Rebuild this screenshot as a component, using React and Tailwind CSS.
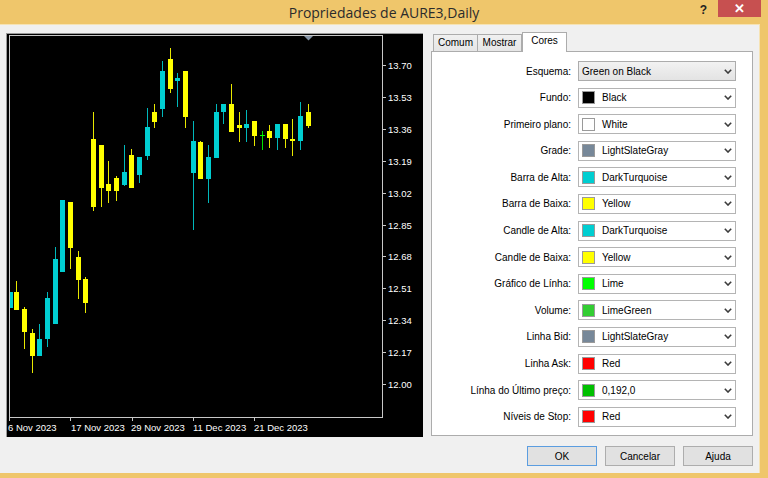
import React from "react";

const candles = [
  [10, 292, 308, 292, 308, "c", 3],
  [14, 292, 310, 281, 310, "y"],
  [22, 309, 332, 307, 349, "y"],
  [30, 333, 356, 329, 373, "y"],
  [37, 339, 356, 324, 356, "c"],
  [45, 298, 339, 292, 347, "c"],
  [53, 259, 324, 247, 324, "c"],
  [60, 200, 272, 200, 272, "c"],
  [68, 202, 248, 202, 269, "y"],
  [76, 257, 280, 251, 299, "y"],
  [83, 279, 303, 277, 313, "y"],
  [91, 139, 207, 112, 211, "y"],
  [99, 145, 188, 145, 207, "y"],
  [106, 184, 191, 161, 203, "y"],
  [114, 178, 191, 176, 201, "y"],
  [122, 172, 185, 145, 186, "c"],
  [129, 155, 188, 149, 188, "y"],
  [137, 157, 175, 157, 183, "c"],
  [145, 127, 156, 108, 160, "c"],
  [152, 112, 122, 104, 128, "y"],
  [160, 71, 109, 61, 117, "c"],
  [168, 59, 89, 48, 93, "y"],
  [175, 78, 81, 73, 107, "c"],
  [183, 71, 117, 71, 128, "y"],
  [191, 141, 173, 121, 230, "c"],
  [198, 142, 179, 141, 179, "y"],
  [206, 157, 179, 145, 203, "c"],
  [214, 112, 158, 104, 158, "c"],
  [221, 104, 112, 104, 124, "c"],
  [229, 104, 132, 84, 132, "y"],
  [237, 125, 128, 112, 142, "y"],
  [244, 124, 128, 110, 142, "c"],
  [252, 121, 136, 121, 146, "y"],
  [260, 135, 136, 131, 150, "l"],
  [267, 131, 138, 125, 148, "y"],
  [275, 124, 138, 124, 150, "c"],
  [283, 124, 139, 124, 148, "y"],
  [290, 139, 141, 119, 156, "y"],
  [298, 116, 141, 102, 150, "c"],
  [306, 112, 126, 104, 128, "y"],
];

const bodyColor = { y: "#ffff00", c: "#00ced1", l: "#00ff00" };
const wickColor = { y: "#e8e800", c: "#00b8bb", l: "#00e000" };

const prices = ["13.70", "13.53", "13.36", "13.19", "13.02", "12.85", "12.68", "12.51", "12.34", "12.17", "12.00"];
const dates = [
  [9, 8, "6 Nov 2023"],
  [70, 71, "17 Nov 2023"],
  [132, 131, "29 Nov 2023"],
  [193, 193, "11 Dec 2023"],
  [254, 254, "21 Dec 2023"],
];

function Chart() {
  return (
    <svg width="417" height="404" viewBox="6 33 417 404" className="block shrink-0">
      <rect x="6" y="33" width="417" height="404" fill="#000" />
      <line x1="6.5" y1="33" x2="6.5" y2="437" stroke="#9a9a9a" />
      <line x1="6" y1="33.5" x2="423" y2="33.5" stroke="#9a9a9a" />
      <rect x="9.5" y="35.5" width="373" height="382" fill="none" stroke="#c8c8c8" />
      <polygon points="304,36 313,36 308.5,40.5" fill="#8796a8" />
      {candles.map(([x, bt, bb, wt, wb, t, w], i) => (
        <g key={i}>
          <rect x={x + 2} y={wt} width="1" height={wb - wt} fill={wickColor[t]} />
          <rect x={x} y={bt} width={w || 5} height={Math.max(bb - bt, 1)} fill={bodyColor[t]} />
        </g>
      ))}
      {prices.map((p, i) => {
        const y = Math.round(65 + i * 31.9);
        return (
          <g key={p}>
            <rect x="383" y={y} width="3" height="1" fill="#c8c8c8" />
            <text x="388" y={y + 3.6} fontFamily="'Liberation Sans', Arial, sans-serif" fontSize="9.5" fill="#ffffff">
              {p}
            </text>
          </g>
        );
      })}
      {dates.map(([tx, lx, d]) => (
        <g key={d}>
          <rect x={tx} y="418" width="1" height="3" fill="#c8c8c8" />
          <text x={lx} y="430.5" fontFamily="'Liberation Sans', Arial, sans-serif" fontSize="9.5" fill="#ffffff">
            {d}
          </text>
        </g>
      ))}
    </svg>
  );
}

const rows = [
  ["Fundo:", "#000000", "Black"],
  ["Primeiro plano:", "#ffffff", "White"],
  ["Grade:", "#778899", "LightSlateGray"],
  ["Barra de Alta:", "#00ced1", "DarkTurquoise"],
  ["Barra de Baixa:", "#ffff00", "Yellow"],
  ["Candle de Alta:", "#00ced1", "DarkTurquoise"],
  ["Candle de Baixa:", "#ffff00", "Yellow"],
  ["Gráfico de Línha:", "#00ff00", "Lime"],
  ["Volume:", "#32cd32", "LimeGreen"],
  ["Linha Bid:", "#778899", "LightSlateGray"],
  ["Linha Ask:", "#ff0000", "Red"],
  ["Línha do Último preço:", "#00c000", "0,192,0"],
  ["Níveis de Stop:", "#ff0000", "Red"],
];

function Chevron() {
  return (
    <svg width="8" height="5" viewBox="0 0 8 5" className="shrink-0">
      <path d="M0.8 0.8 L4 4 L7.2 0.8" fill="none" stroke="#3c3c3c" strokeWidth="1.6" />
    </svg>
  );
}

function Row({ label, children, gray }) {
  return (
    <div className="flex h-[20px] items-center">
      <div className="w-[146px] pr-[7px] text-right">{label}</div>
      <div
        className={
          "flex h-[20px] w-[158px] items-center border pr-[3px] " +
          (gray ? "border-[#acacac] bg-gradient-to-b from-[#f2f2f2] to-[#e3e3e3] pl-[3px]" : "border-[#b4b4b4] bg-white pl-[3px]")
        }
      >
        <div className="flex flex-1 items-center">{children}</div>
        <Chevron />
      </div>
    </div>
  );
}

export default function App() {
  const font = { fontFamily: "'Liberation Sans', Arial, sans-serif" };
  return (
    <div className="flex h-[478px] w-[768px] flex-col overflow-hidden bg-[#efc66b] text-[10px] text-black" style={font}>
      <div className="grid h-[24px] shrink-0 grid-cols-[1fr_auto_1fr] items-start">
        <div />
        <div className="pt-[2px] text-[14px] text-[#2b2b2b]" style={{ fontFamily: "'Open Sans', 'Noto Sans', sans-serif" }}>
          Propriedades de AURE3,Daily
        </div>
        <div className="flex items-start justify-end pr-[7px]">
          <span className="mr-[11px] mt-[1px] text-[12px] font-bold text-[#222]">?</span>
          <div className="flex h-[17px] w-[43px] items-center justify-center bg-[#c75050] text-[13px] font-bold leading-none text-white">
            ✕
          </div>
        </div>
      </div>
      <div className="mb-[5px] mr-[8px] flex flex-1 items-start border-r border-t border-[#f6e3b4] bg-[#f0f0f0] pt-[7px]">
        <div className="ml-[6px] mt-[1px]">
          <Chart />
        </div>
        <div className="ml-[8px] flex w-[322px] flex-col">
          <div className="flex h-[20px] items-end pl-[2px]">
            <div className="flex h-[18px] w-[45px] items-center justify-center border border-b-0 border-[#acacac] bg-gradient-to-b from-[#f0f0f0] to-[#e5e5e5] pb-[2px]">
              Comum
            </div>
            <div className="-ml-px flex h-[18px] w-[45px] items-center justify-center border border-b-0 border-[#acacac] bg-gradient-to-b from-[#f0f0f0] to-[#e5e5e5] pb-[2px]">
              Mostrar
            </div>
            <div className="relative z-10 flex h-[20px] w-[45px] items-center justify-center border border-b-0 border-[#acacac] bg-white pb-[5px]">
              Cores
            </div>
          </div>
          <div className="-mt-px flex h-[385px] flex-col gap-[6.6px] border border-[#acacac] bg-white pt-[9px]">
            <Row label="Esquema:" gray>
              <span>Green on Black</span>
            </Row>
            {rows.map(([label, color, name]) => (
              <Row key={label} label={label}>
                <span className="h-[13px] w-[13px] shrink-0 border border-[#9a9a9a]" style={{ backgroundColor: color }} />
                <span className="ml-[7px]">{name}</span>
              </Row>
            ))}
          </div>
          <div className="mt-[10px] flex justify-end gap-[8px]">
            <button className="h-[20px] w-[70px] border border-[#5b9de0] bg-[#e1e1e1]">OK</button>
            <button className="h-[20px] w-[70px] border border-[#adadad] bg-[#e1e1e1]">Cancelar</button>
            <button className="h-[20px] w-[70px] border border-[#adadad] bg-[#e1e1e1]">Ajuda</button>
          </div>
        </div>
      </div>
    </div>
  );
}
